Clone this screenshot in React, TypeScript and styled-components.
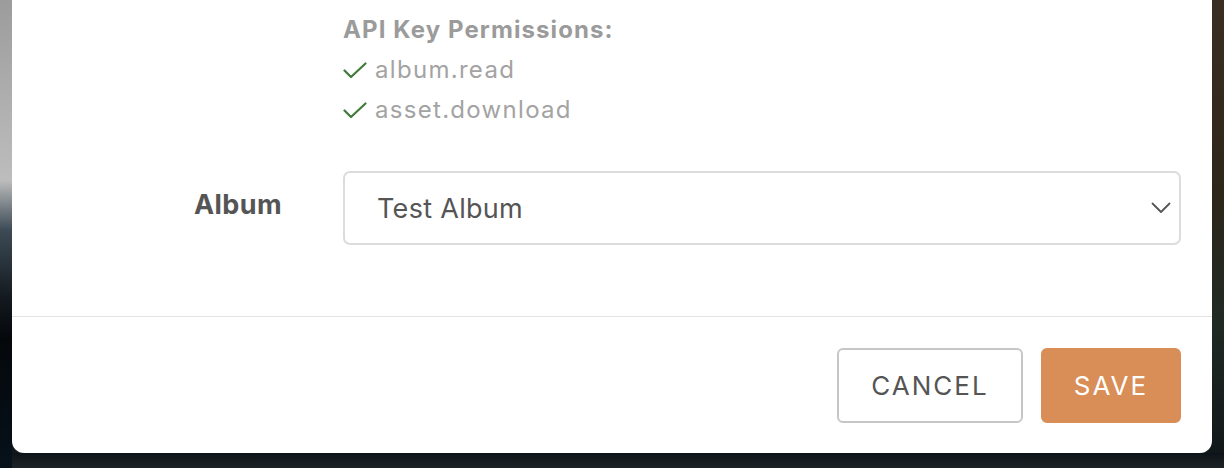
import * as React from "react";
import styled, { createGlobalStyle } from "styled-components";

const GlobalStyle = createGlobalStyle`
  html, body {
    margin: 0;
    padding: 0;
    height: 100%;
  }
  body {
    font-family: Inter, "Noto Sans", sans-serif;
    background:
      linear-gradient(180deg, transparent 0, transparent 453px, #0d1419 453px, #1d2226 468px),
      linear-gradient(180deg, #3a2e22 0, #2e2619 40%, #1f2a24 70%, #0f1518 100%);
    overflow: hidden;
  }
`;

const Backdrop = styled.div`
  width: 1224px;
  height: 468px;
  background: linear-gradient(
    180deg,
    #9c9c9c 0,
    #bdbdbd 180px,
    #3d4b56 230px,
    #12181d 300px,
    #05080b 340px,
    #06111a 468px
  );
  background-size: 12px 100%;
  background-repeat: no-repeat;
`;

const Modal = styled.div`
  margin-left: 12px;
  width: 1200px;
  height: 453px;
  background: #ffffff;
  border-radius: 0 0 12px 12px;
  display: flex;
  flex-direction: column;
`;

const Body = styled.div`
  height: 317px;
  box-sizing: border-box;
  padding: 10px 31px 0 0;
  display: grid;
  grid-template-columns: 270px 1fr;
  column-gap: 61px;
  align-content: start;
  row-gap: 41px;
  border-bottom: 1px solid #e4e4e4;
`;

const Permissions = styled.div`
  grid-column: 2;
  display: flex;
  flex-direction: column;
`;

const PermTitle = styled.div`
  font-size: 24px;
  font-weight: 700;
  letter-spacing: 1.1px;
  line-height: 40px;
  color: #9b9b9b;
`;

const PermItem = styled.div`
  display: flex;
  align-items: center;
  gap: 8px;
  font-size: 24px;
  letter-spacing: 1.3px;
  line-height: 40px;
  color: #a3a3a3;
`;

const Label = styled.label`
  grid-column: 1;
  align-self: center;
  text-align: right;
  font-size: 27px;
  font-weight: 700;
  letter-spacing: 0.4px;
  color: #555555;
  padding-bottom: 8px;
`;

const Select = styled.div`
  grid-column: 2;
  height: 74px;
  box-sizing: border-box;
  border: 2px solid #dcdcdc;
  border-radius: 7px;
  display: flex;
  align-items: center;
  justify-content: space-between;
  padding: 0 8px 0 32px;
  font-size: 27px;
  letter-spacing: 0.3px;
  color: #555555;
`;

const Footer = styled.div`
  flex: 1;
  display: flex;
  align-items: center;
  justify-content: flex-end;
  gap: 18px;
  padding-right: 31px;
`;

const Button = styled.button<{ $primary?: boolean }>`
  height: 75px;
  box-sizing: border-box;
  padding: 0;
  width: ${({ $primary }) => ($primary ? "140px" : "186px")};
  border-radius: 6px;
  border: 2px solid ${({ $primary }) => ($primary ? "#d98d57" : "#c6c6c6")};
  background: ${({ $primary }) => ($primary ? "#d98d57" : "#ffffff")};
  color: ${({ $primary }) => ($primary ? "#ffffff" : "#555555")};
  font-family: Inter, "Noto Sans", sans-serif;
  font-size: 26px;
  font-weight: 400;
  letter-spacing: 2px;
  text-transform: uppercase;
  cursor: pointer;
`;

const Check = () => (
  <svg width="24" height="17" viewBox="0 0 24 17" fill="none">
    <path
      d="M1.5 8.5 L8 15 L22.5 1.5"
      stroke="#3e7b3a"
      strokeWidth="2.2"
      strokeLinecap="round"
      strokeLinejoin="round"
    />
  </svg>
);

const Chevron = () => (
  <svg width="20" height="12" viewBox="0 0 20 12" fill="none">
    <path
      d="M1.5 1.5 L10 10 L18.5 1.5"
      stroke="#555555"
      strokeWidth="1.8"
      strokeLinecap="round"
      strokeLinejoin="round"
    />
  </svg>
);

export default function App() {
  return (
    <>
      <GlobalStyle />
      <Backdrop>
        <Modal>
          <Body>
            <Permissions>
              <PermTitle>API Key Permissions:</PermTitle>
              <PermItem>
                <Check />
                album.read
              </PermItem>
              <PermItem>
                <Check />
                asset.download
              </PermItem>
            </Permissions>
            <Label>Album</Label>
            <Select>
              <span>Test Album</span>
              <Chevron />
            </Select>
          </Body>
          <Footer>
            <Button>Cancel</Button>
            <Button $primary>Save</Button>
          </Footer>
        </Modal>
      </Backdrop>
    </>
  );
}
